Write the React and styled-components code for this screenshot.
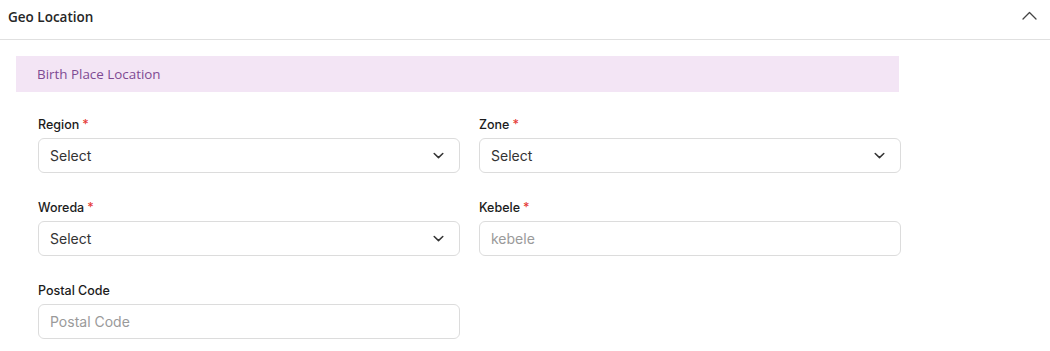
import React from 'react';
import styled, { createGlobalStyle } from 'styled-components';

const GlobalStyle = createGlobalStyle`
  body {
    margin: 0;
    background: #fff;
    font-family: Inter, "Noto Sans", sans-serif;
  }
`;

const Panel = styled.section`
  width: 1050px;
  background: #fff;
`;

const PanelHeader = styled.div`
  height: 40px;
  display: flex;
  align-items: flex-start;
  justify-content: space-between;
  padding: 8px 13px 0 8px;
  border-bottom: 1px solid #e0e0e0;
  box-sizing: border-box;
`;

const PanelTitle = styled.h3`
  margin: 0;
  font-family: "Open Sans", sans-serif;
  font-size: 13.5px;
  line-height: 18px;
  font-weight: 600;
  color: #262626;
`;

const ToggleIcon = styled.span`
  display: flex;
  padding-top: 3px;
`;

const PanelBody = styled.div`
  padding: 16px 0 0 16px;
`;

const SectionBand = styled.div`
  width: 883px;
  height: 36px;
  display: flex;
  align-items: center;
  padding-left: 21px;
  box-sizing: border-box;
  background: #f3e5f5;
  font-family: "Open Sans", sans-serif;
  font-size: 13.4px;
  color: #7e4a93;
`;

const FormGrid = styled.div`
  display: grid;
  grid-template-columns: 422px 422px;
  column-gap: 19px;
  row-gap: 26px;
  padding: 24px 0 0 22px;
`;

const Field = styled.div`
  display: flex;
  flex-direction: column;
  gap: 4px;
`;

const Label = styled.label`
  font-size: 12.5px;
  font-weight: 500;
  line-height: 18px;
  color: #1c1c1c;
`;

const Required = styled.span`
  color: #e53935;
  margin-left: 3px;
`;

const Control = styled.div`
  height: 35px;
  display: flex;
  align-items: center;
  justify-content: space-between;
  padding: 0 15px 0 11px;
  box-sizing: border-box;
  border: 1px solid #dcdcdc;
  border-radius: 6px;
  font-size: 14px;
  color: ${p => (p.$placeholder ? '#9a9a9a' : '#333')};
`;

const ChevronUp = () => (
  <svg width="15" height="9" viewBox="0 0 15 9" fill="none">
    <polyline points="1,8 7.5,1.5 14,8" stroke="#444" strokeWidth="1.3" strokeLinecap="round" strokeLinejoin="round" />
  </svg>
);

const ChevronDown = () => (
  <svg width="11" height="7" viewBox="0 0 11 7" fill="none">
    <polyline points="1.2,1.5 5.5,5.6 9.8,1.5" stroke="#333" strokeWidth="1.5" strokeLinecap="round" strokeLinejoin="round" />
  </svg>
);

const fields = [
  { label: 'Region', required: true, select: true, value: 'Select' },
  { label: 'Zone', required: true, select: true, value: 'Select' },
  { label: 'Woreda', required: true, select: true, value: 'Select' },
  { label: 'Kebele', required: true, value: 'kebele' },
  { label: 'Postal Code', value: 'Postal Code' },
];

const App = () => {
  return (
    <>
      <GlobalStyle />
      <Panel>
        <PanelHeader>
          <PanelTitle>Geo Location</PanelTitle>
          <ToggleIcon>
            <ChevronUp />
          </ToggleIcon>
        </PanelHeader>
        <PanelBody>
          <SectionBand>Birth Place Location</SectionBand>
          <FormGrid>
            {fields.map((f, i) => (
              <Field key={i}>
                <Label>
                  {f.label}
                  {f.required && <Required>*</Required>}
                </Label>
                <Control $placeholder={!f.select}>
                  {f.value}
                  {f.select && <ChevronDown />}
                </Control>
              </Field>
            ))}
          </FormGrid>
        </PanelBody>
      </Panel>
    </>
  );
};

export default App;
